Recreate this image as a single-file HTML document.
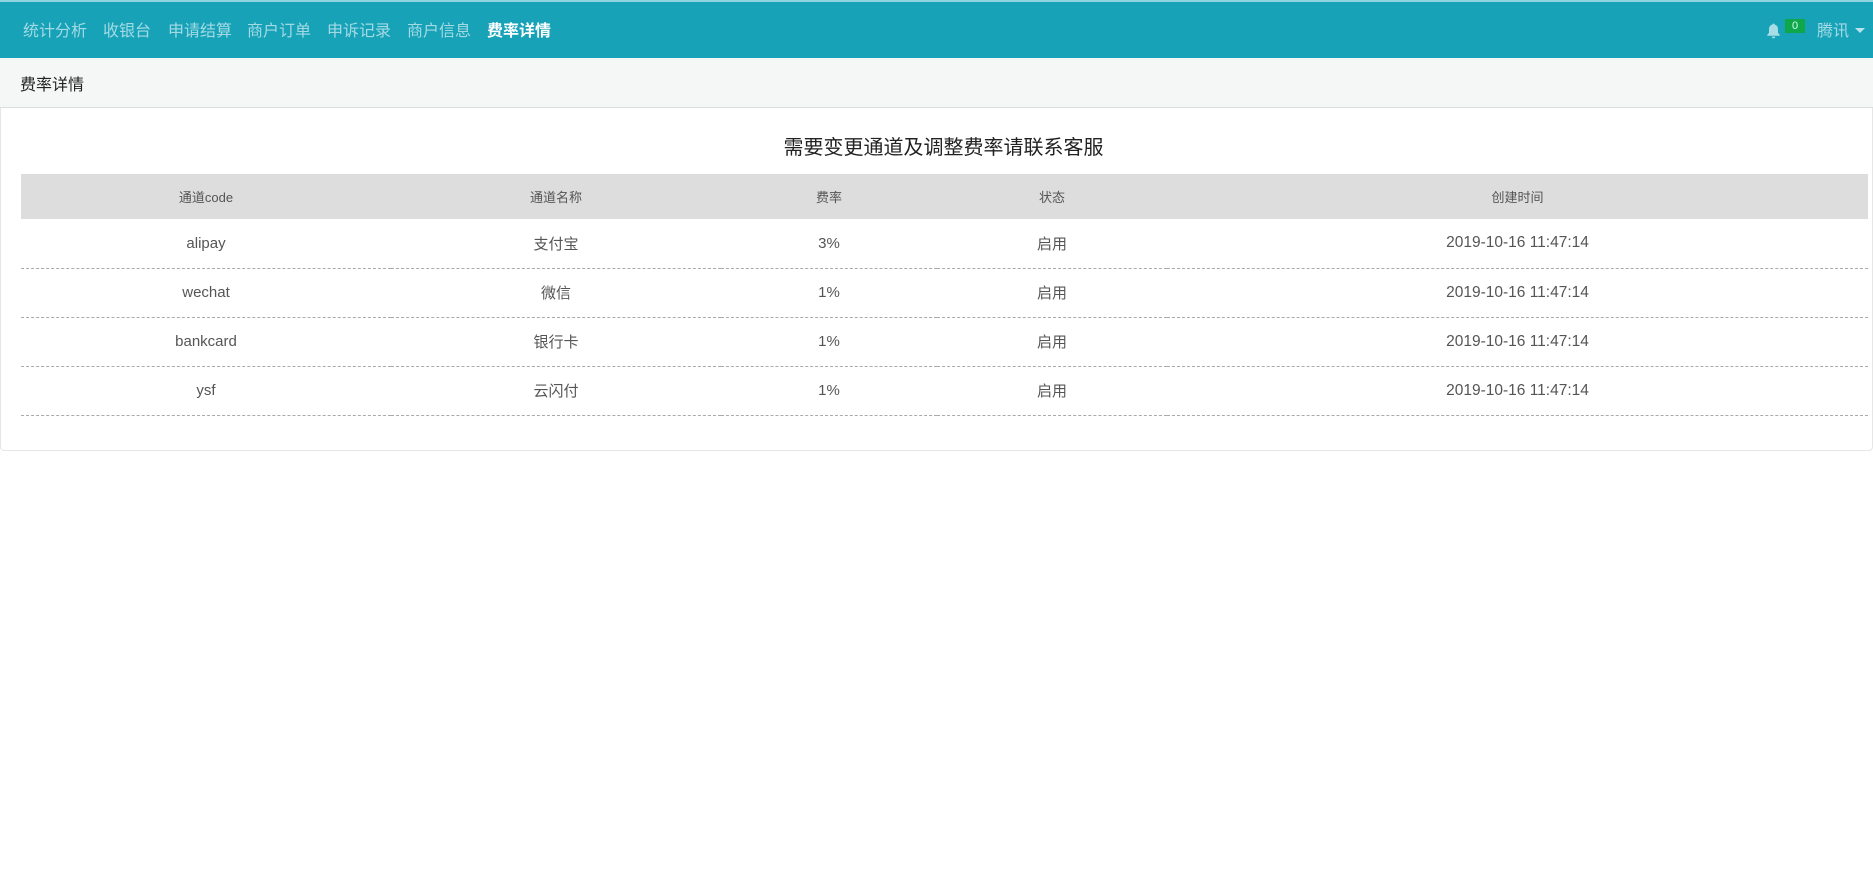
<!DOCTYPE html>
<html><head><meta charset="utf-8"><style>
*{margin:0;padding:0;box-sizing:border-box}
body{width:1873px;height:884px;background:#fff;font-family:"Liberation Sans","Noto Sans CJK SC",sans-serif;overflow:hidden;position:relative}
.nav{position:absolute;left:0;top:0;width:1873px;height:58px;background:#17a2b8;border-top:2px solid #8fd3de}
.nav a{position:absolute;top:15px;font-size:16px;color:rgba(255,255,255,.6);white-space:nowrap}
.nav a.act{color:#fff;font-weight:bold}
.crumb{position:absolute;left:0;top:58px;width:1873px;height:50px;background:#f5f6f6;border-bottom:1px solid #ddd;font-size:16px;color:#222;padding:13px 0 0 20px}
.card{position:absolute;left:0;top:108px;width:1873px;height:343px;border:1px solid #e6e6e6;border-top:none;border-radius:0 0 4px 4px}
.title{position:absolute;top:23px;left:6px;width:1873px;text-align:center;font-size:20px;color:#222}
table{position:absolute;left:20px;top:66px;width:1847px;border-collapse:collapse;table-layout:fixed}
th{background:#ddd;height:45px;font-weight:normal;font-size:13px;color:#555}
td{height:49px;text-align:center;font-size:15px;color:#555;border-bottom:1px dashed #aaa}
td.dt{font-size:15.5px}
</style></head><body>
<div class="nav">
<a style="left:23px">统计分析</a><a style="left:103px">收银台</a><a style="left:168px">申请结算</a><a style="left:247px">商户订单</a><a style="left:327px">申诉记录</a><a style="left:407px">商户信息</a><a class="act" style="left:487px">费率详情</a>
<svg style="position:absolute;left:1766px;top:21px" width="15" height="16" viewBox="0 0 14 16"><path d="M7 0.5c.7 0 1 .5 1 1 2.3.5 3.5 2.3 3.5 4.8v3.5l1.8 2.2v.8H.7v-.8l1.8-2.2V6.3C2.5 3.8 3.7 2 6 1.5c0-.5.3-1 1-1zM5.3 13.6h3.4A1.7 1.7 0 0 1 5.3 13.6z" fill="#a8dde6"/></svg>
<div style="position:absolute;left:1785px;top:17px;width:20px;height:14px;background:#10a64a;color:#cfe;font-size:11px;text-align:center;line-height:14px">0</div>
<a style="left:1817px;color:rgba(255,255,255,.6)">腾讯</a>
<div style="position:absolute;left:1855px;top:26px;border-left:5px solid transparent;border-right:5px solid transparent;border-top:5px solid rgba(255,255,255,.7)"></div>
</div>
<div class="crumb">费率详情</div>
<div class="card">
<div class="title">需要变更通道及调整费率请联系客服</div>
<table>
<colgroup><col style="width:370px"><col style="width:330px"><col style="width:216px"><col style="width:230px"><col></colgroup>
<tr><th>通道code</th><th>通道名称</th><th>费率</th><th>状态</th><th>创建时间</th></tr>
<tr><td>alipay</td><td>支付宝</td><td>3%</td><td>启用</td><td class="dt">2019-10-16 11:47:14</td></tr>
<tr><td>wechat</td><td>微信</td><td>1%</td><td>启用</td><td class="dt">2019-10-16 11:47:14</td></tr>
<tr><td>bankcard</td><td>银行卡</td><td>1%</td><td>启用</td><td class="dt">2019-10-16 11:47:14</td></tr>
<tr><td>ysf</td><td>云闪付</td><td>1%</td><td>启用</td><td class="dt">2019-10-16 11:47:14</td></tr>
</table>
</div>
</body></html>
